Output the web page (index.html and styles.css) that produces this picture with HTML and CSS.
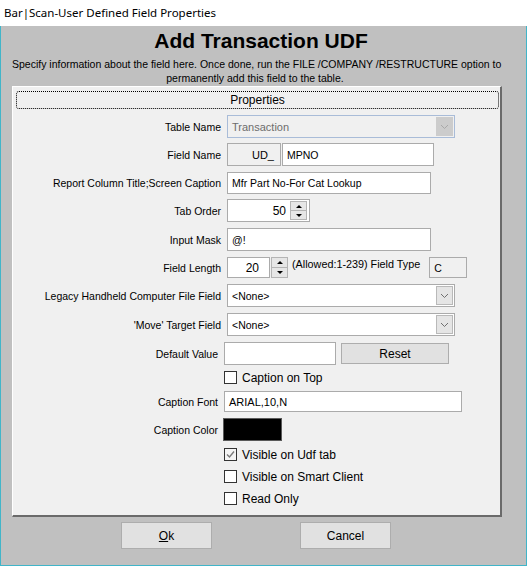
FILE: index.html
```html
<!DOCTYPE html>
<html lang="en">
<head>
    <meta charset="UTF-8">
    <title>Bar|Scan-User Defined Field Properties</title>
    <link rel="stylesheet" href="styles.css">
</head>
<body>
    <div class="window">
        <div class="titlebar">Bar|Scan-User Defined Field Properties</div>
        <div class="client">
            <h1 class="heading">Add Transaction UDF</h1>
            <p class="intro">Specify information about the field here. Once done, run the FILE /COMPANY /RESTRUCTURE option to<br>permanently add this field to the table.</p>

            <div class="panel">
                <div class="tab-caption">Properties</div>
                <div class="form">
                    <div class="row tight">
                        <span class="label">Table Name</span>
                        <div class="combo disabled f-combo">
                            <span class="combo-text">Transaction</span>
                            <span class="drop"><svg width="9" height="6" viewBox="0 0 9 6"><path d="M1 1 L4.5 4.5 L8 1" fill="none" stroke="#a8a8a8" stroke-width="1"/></svg></span>
                        </div>
                    </div>
                    <div class="row">
                        <span class="label">Field Name</span>
                        <div class="field readonly f-prefix">UD_</div>
                        <div class="field f-name">MPNO</div>
                    </div>
                    <div class="row tight slim">
                        <span class="label">Report Column Title;Screen Caption</span>
                        <div class="field f-caption">Mfr Part No-For Cat Lookup</div>
                    </div>
                    <div class="row">
                        <span class="label">Tab Order</span>
                        <div class="field number f-tab">
                            <span class="num">50</span>
                            <span class="spin"><span class="spin-up"></span><span class="spin-down"></span></span>
                        </div>
                    </div>
                    <div class="row">
                        <span class="label">Input Mask</span>
                        <div class="field f-caption">@!</div>
                    </div>
                    <div class="row short">
                        <span class="label">Field Length</span>
                        <div class="field number f-length"><span class="num">20</span></div>
                        <span class="spin outside"><span class="spin-up"></span><span class="spin-down"></span></span>
                        <span class="hint">(Allowed:1-239) Field Type</span>
                        <div class="field readonly f-type">C</div>
                    </div>
                    <div class="row">
                        <span class="label">Legacy Handheld Computer File Field</span>
                        <div class="combo f-combo">
                            <span class="combo-text">&lt;None&gt;</span>
                            <span class="drop"><svg width="9" height="6" viewBox="0 0 9 6"><path d="M1 1 L4.5 4.5 L8 1" fill="none" stroke="#707070" stroke-width="1"/></svg></span>
                        </div>
                    </div>
                    <div class="row">
                        <span class="label">'Move' Target Field</span>
                        <div class="combo f-combo">
                            <span class="combo-text">&lt;None&gt;</span>
                            <span class="drop"><svg width="9" height="6" viewBox="0 0 9 6"><path d="M1 1 L4.5 4.5 L8 1" fill="none" stroke="#707070" stroke-width="1"/></svg></span>
                        </div>
                    </div>
                    <div class="row lower">
                        <span class="label">Default Value</span>
                        <div class="field f-default"></div>
                        <div class="btn reset">Reset</div>
                    </div>
                    <div class="row lower check check-top">
                        <span class="label"></span>
                        <span class="box"></span>
                        <span class="check-text">Caption on Top</span>
                    </div>
                    <div class="row lower short">
                        <span class="label">Caption Font</span>
                        <div class="field f-font">ARIAL,10,N</div>
                    </div>
                    <div class="row lower swatch-row">
                        <span class="label">Caption Color</span>
                        <div class="swatch"></div>
                    </div>
                    <div class="row lower check">
                        <span class="label"></span>
                        <span class="box checked"><svg width="11" height="11" viewBox="0 0 11 11"><path d="M2 5.5 L4.5 8 L9 2.5" fill="none" stroke="#7a7a7a" stroke-width="1.4"/></svg></span>
                        <span class="check-text">Visible on Udf tab</span>
                    </div>
                    <div class="row lower check">
                        <span class="label"></span>
                        <span class="box"></span>
                        <span class="check-text">Visible on Smart Client</span>
                    </div>
                    <div class="row lower check">
                        <span class="label"></span>
                        <span class="box"></span>
                        <span class="check-text">Read Only</span>
                    </div>
                </div>
            </div>

            <div class="buttons">
                <div class="btn dialog-btn"><u>O</u>k</div>
                <div class="btn dialog-btn">Cancel</div>
            </div>
        </div>
    </div>
</body>
</html>
```

FILE: styles.css
```css
body {
    margin: 0;
    padding: 0;
    font-family: "Liberation Sans", Arial, sans-serif;
    font-size: 10.5px;
    color: #000;
    background-color: #fff;
}
.window {
    width: 527px;
    height: 566px;
    display: flex;
    flex-direction: column;
}
.titlebar {
    height: 26px;
    line-height: 25px;
    padding-left: 4px;
    background-color: #fff;
    font-family: "Noto Sans", "Open Sans", sans-serif;
    font-size: 11.5px;
}
.client {
    flex: 1;
    background-color: #c0c0c0;
    border: 1px solid #41b5c9;
    border-top: none;
    padding: 0 11px;
}
.heading {
    width: 498px;
    margin: 3px 0 0;
    font-size: 21px;
    line-height: 24px;
    font-weight: bold;
    text-align: center;
}
.intro {
    width: 486px;
    margin: 4px 0 0;
    line-height: 14px;
    text-align: center;
    white-space: nowrap;
}
.panel {
    width: 490px;
    height: 431px;
    box-sizing: border-box;
    margin-top: 1px;
    background-color: #f0f0f0;
    border-top: 1px solid #fff;
    border-left: 1px solid #fff;
    border-right: 2px solid #6a6a6a;
    border-bottom: 2px solid #6a6a6a;
}
.tab-caption {
    width: 483px;
    height: 18px;
    box-sizing: border-box;
    margin: 4px 0 0 3px;
    border: 1px dotted #000;
    border-radius: 3px;
    font-size: 12px;
    line-height: 16px;
    text-align: center;
}
.form {
    margin-top: 6px;
}
.row {
    display: flex;
    align-items: center;
    height: 23px;
    margin-bottom: 6px;
}
.row.tight {
    margin-bottom: 5px;
}
.row.slim {
    height: 22px;
}
.row.short {
    height: 21px;
}
.label {
    flex: none;
    width: 214px;
    box-sizing: border-box;
    padding-right: 6px;
    text-align: right;
    white-space: nowrap;
}
.row.lower .label {
    width: 211px;
}
.field {
    height: 100%;
    box-sizing: border-box;
    display: flex;
    align-items: center;
    padding: 0 4px;
    background-color: #fff;
    border: 1px solid #ababab;
    white-space: nowrap;
}
.field.readonly {
    background-color: #f0f0f0;
}
.f-prefix {
    width: 54px;
    justify-content: flex-end;
    padding-right: 6px;
    font-size: 11px;
}
.f-name {
    width: 152px;
    margin-left: 1px;
}
.f-caption {
    width: 204px;
}
.f-tab {
    width: 83px;
    padding-right: 2px;
}
.f-length {
    width: 43px;
    padding-right: 10px;
}
.number .num {
    flex: 1;
    text-align: right;
    font-size: 12px;
}
.f-type {
    width: 38px;
    margin-left: 9px;
}
.hint {
    align-self: flex-start;
    margin-left: 4px;
    margin-top: 1px;
    font-size: 10.8px;
}
.f-default {
    width: 112px;
}
.f-font {
    width: 238px;
    font-size: 11px;
}

/* spinner buttons */
.spin {
    width: 15px;
    height: 17px;
    display: flex;
    flex-direction: column;
    border: 1px solid #b4b4b4;
    background-color: #e6e6e6;
    margin-left: 4px;
}
.spin.outside {
    height: 19px;
    margin-left: 1px;
}
.spin-up,
.spin-down {
    flex: 1;
    display: flex;
    align-items: center;
    justify-content: center;
}
.spin-down {
    border-top: 1px solid #b4b4b4;
}
.spin-up::after {
    content: "";
    border-left: 3px solid transparent;
    border-right: 3px solid transparent;
    border-bottom: 3px solid #000;
}
.spin-down::after {
    content: "";
    border-left: 3px solid transparent;
    border-right: 3px solid transparent;
    border-top: 3px solid #000;
}

/* combo boxes */
.combo {
    height: 100%;
    box-sizing: border-box;
    display: flex;
    align-items: center;
    background-color: #fff;
    border: 1px solid #ababab;
    padding: 1px;
}
.combo.disabled {
    background-color: #f0f0f0;
    border-color: #a9bcd8;
    color: #6d6d6d;
}
.f-combo {
    width: 228px;
}
.combo-text {
    flex: 1;
    padding-left: 3px;
}
.combo.disabled .combo-text {
    font-size: 11px;
}
.drop {
    width: 17px;
    height: 100%;
    box-sizing: border-box;
    display: flex;
    align-items: center;
    justify-content: center;
    background-color: #e5e5e5;
    border: 1px solid #b9b9b9;
}
.combo.disabled .drop {
    background-color: #cccccc;
    border-color: #cccccc;
}

/* buttons */
.btn {
    box-sizing: border-box;
    display: flex;
    align-items: center;
    justify-content: center;
    background-color: #e1e1e1;
    border: 1px solid #adadad;
    font-size: 12px;
}
.reset {
    width: 108px;
    height: 21px;
    margin-left: 5px;
    align-self: flex-start;
    margin-top: 1px;
}
.buttons {
    display: flex;
    gap: 88px;
    margin: 5px 0 0 109px;
}
.dialog-btn {
    width: 91px;
    height: 27px;
}
.dialog-btn u {
    text-decoration: underline;
}

/* checkboxes */
.row.check {
    height: 13px;
    margin-bottom: 9px;
}
.row.check-top {
    margin-bottom: 7px;
}
.box {
    flex: none;
    width: 13px;
    height: 13px;
    box-sizing: border-box;
    border: 1px solid #333;
    background-color: #fff;
    display: flex;
    align-items: center;
    justify-content: center;
}
.box.checked {
    background-color: #f4f4f4;
}
.check-text {
    margin-left: 5px;
    font-size: 12px;
    white-space: nowrap;
}

.swatch-row {
    margin-bottom: 7px;
}
.swatch {
    width: 59px;
    height: 23px;
    box-sizing: border-box;
    margin-left: -1px;
    background-color: #000;
    border: 1px solid #5a5a5a;
}
```
